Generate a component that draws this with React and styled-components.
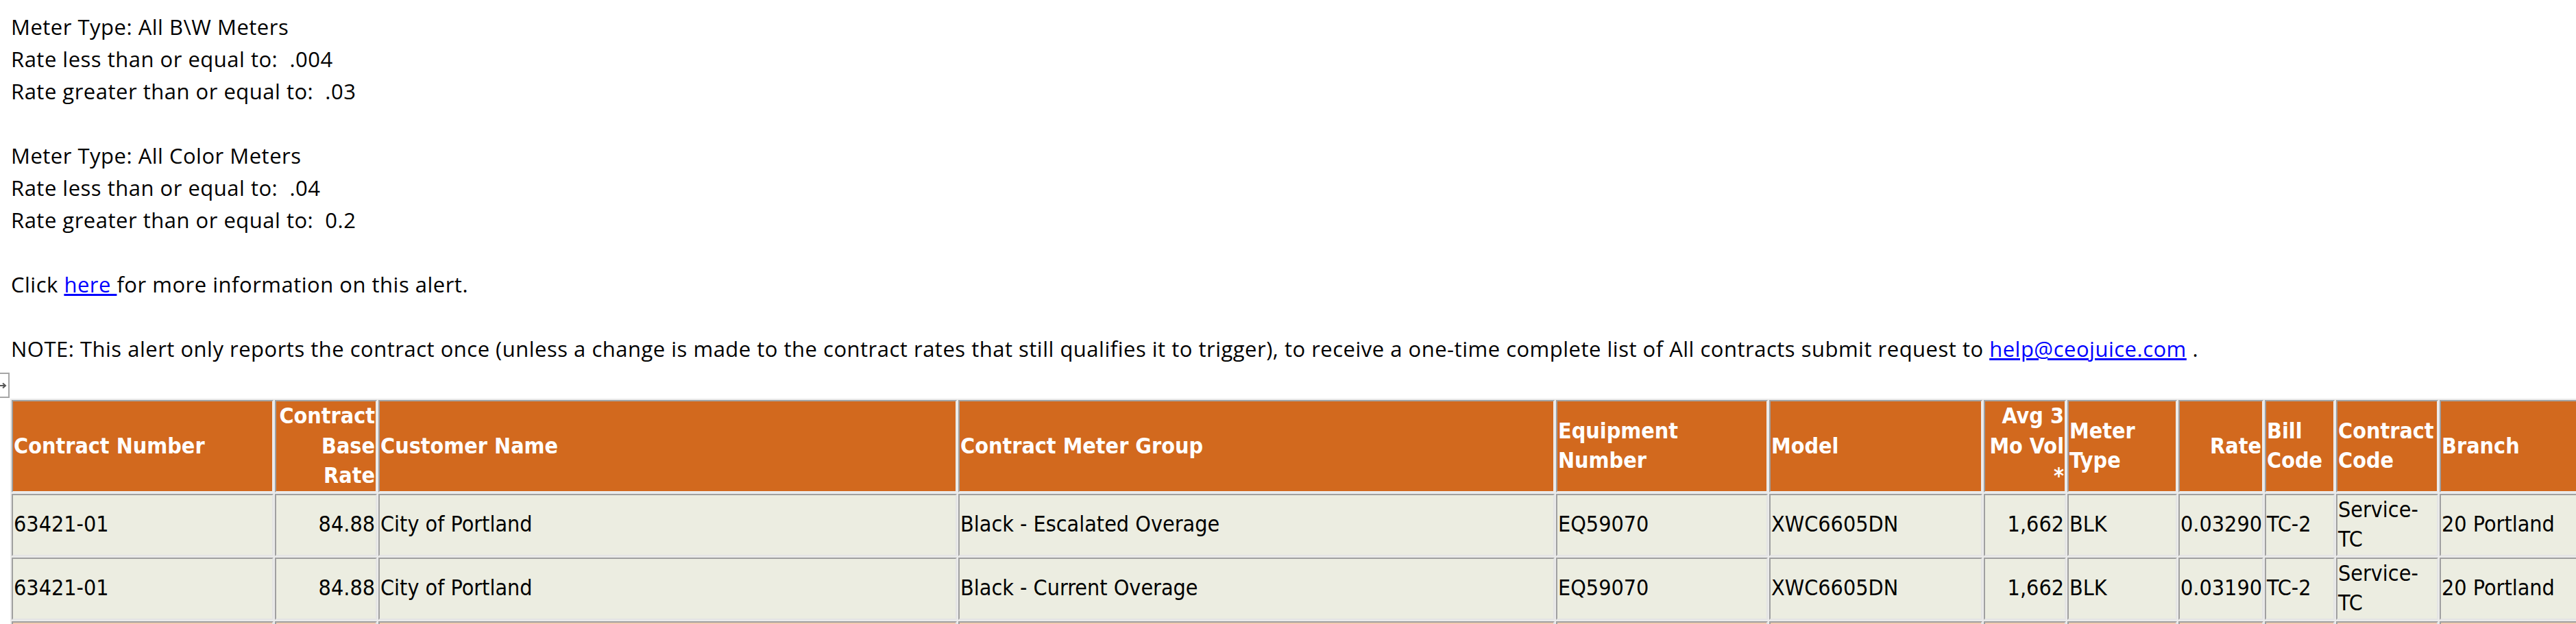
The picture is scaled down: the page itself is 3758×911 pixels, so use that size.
import React from 'react';
import styled, { createGlobalStyle } from 'styled-components';

const GlobalStyle = createGlobalStyle`
  html, body {
    margin: 0;
    padding: 0;
    overflow: hidden;
    background: #ffffff;
  }
`;

const Page = styled.div`
  padding: 16px 0 0 16px;
  color: #000;
`;

const Notes = styled.div`
  font-family: "Open Sans", "Noto Sans", sans-serif;
  font-size: 31px;
  line-height: 47px;
  letter-spacing: 0.5px;
  white-space: nowrap;
`;

const Para = styled.p`
  margin: 0 0 ${p => (p.$last ? 0 : 47)}px 0;
`;

const Link = styled.a`
  color: #0000ff;
  text-decoration: underline;
`;

const MoveHandle = styled.div`
  box-sizing: border-box;
  width: 22px;
  height: 37px;
  margin: 11px 0 0 -24px;
  border: 2px solid #a6a6a6;
  background: #fff;
  display: flex;
  align-items: center;
  justify-content: flex-end;
  padding-right: 2px;
`;

const Grid = styled.table`
  border-collapse: separate;
  border-spacing: 2px;
  table-layout: fixed;
  width: ${p => p.$width}px;
  margin: 1px 0 0 -1px;
  background: #ebebeb;
  font-family: "DejaVu Sans Condensed", "DejaVu Sans", sans-serif;
  font-stretch: condensed;
  font-size: 32px;
  line-height: 43.5px;
`;

const HeadCell = styled.th`
  box-sizing: border-box;
  width: ${p => p.$w}px;
  padding: 0 1px;
  background: #d2691e;
  color: #ffffff;
  font-weight: bold;
  text-align: ${p => p.$align || 'left'};
  vertical-align: middle;
  white-space: nowrap;
  overflow: hidden;
  border-style: solid;
  border-width: 2px;
  border-color: #a0a0a0 #ebebeb #ebebeb #a0a0a0;
`;

const Cell = styled.td`
  box-sizing: border-box;
  padding: 0 1px;
  background: ${p => (p.$tone === 'peach' ? '#f4cbb0' : '#ecede1')};
  text-align: ${p => p.$align || 'left'};
  vertical-align: middle;
  white-space: nowrap;
  overflow: hidden;
  border-style: solid;
  border-width: 2px;
  border-color: #a0a0a0 #e4e4e4 #e4e4e4 #a0a0a0;
`;

const columns = [
  { key: 'contract', label: ['Contract Number'], w: 382 },
  { key: 'base', label: ['Contract', 'Base', 'Rate'], w: 149, align: 'right' },
  { key: 'customer', label: ['Customer Name'], w: 844 },
  { key: 'group', label: ['Contract Meter Group'], w: 870 },
  { key: 'equip', label: ['Equipment', 'Number'], w: 309 },
  { key: 'model', label: ['Model'], w: 311 },
  { key: 'avg', label: ['Avg 3', 'Mo Vol', '*'], w: 120, align: 'right' },
  { key: 'meter', label: ['Meter', 'Type'], w: 160 },
  { key: 'rate', label: ['Rate'], w: 124, align: 'right' },
  { key: 'bill', label: ['Bill', 'Code'], w: 102 },
  { key: 'code', label: ['Contract', 'Code'], w: 149 },
  { key: 'branch', label: ['Branch'], w: 300 },
];

const rows = [
  {
    id: 1, tone: 'plain',
    contract: '63421-01', base: '84.88', customer: 'City of Portland',
    group: 'Black - Escalated Overage', equip: 'EQ59070', model: 'XWC6605DN',
    avg: '1,662', meter: 'BLK', rate: '0.03290', bill: 'TC-2',
    code: ['Service-', 'TC'], branch: '20 Portland',
  },
  {
    id: 2, tone: 'plain',
    contract: '63421-01', base: '84.88', customer: 'City of Portland',
    group: 'Black - Current Overage', equip: 'EQ59070', model: 'XWC6605DN',
    avg: '1,662', meter: 'BLK', rate: '0.03190', bill: 'TC-2',
    code: ['Service-', 'TC'], branch: '20 Portland',
  },
  {
    id: 3, tone: 'peach',
    contract: '63421-01', base: '84.88', customer: 'City of Portland',
    group: 'Color - Current Overage', equip: 'EQ59070', model: 'XWC6605DN',
    avg: '1,204', meter: 'CLR', rate: '0.25000', bill: 'TC-2',
    code: ['Service-', 'TC'], branch: '20 Portland',
  },
];

const lines = (value) => {
  const parts = Array.isArray(value) ? value : [value];
  return parts.map((part, i) => (
    <React.Fragment key={i}>
      {i > 0 && <br />}
      {part}
    </React.Fragment>
  ));
};

const tableWidth = columns.reduce((sum, c) => sum + c.w, 0) + (columns.length + 1) * 2;

function ArrowIcon() {
  return (
    <svg width="12" height="12" viewBox="0 0 12 12">
      <path d="M0 6 H9" stroke="#555" strokeWidth="2" fill="none" />
      <path d="M6 2.5 L10 6 L6 9.5" stroke="#555" strokeWidth="2" fill="none" />
    </svg>
  );
}

export default function App() {
  return (
    <>
      <GlobalStyle />
      <Page>
        <Notes>
          <Para>
            Meter Type: All B\W Meters<br />
            Rate less than or equal to:{'\u00a0\u00a0'}.004<br />
            Rate greater than or equal to:{'\u00a0\u00a0'}.03
          </Para>
          <Para>
            Meter Type: All Color Meters<br />
            Rate less than or equal to:{'\u00a0\u00a0'}.04<br />
            Rate greater than or equal to:{'\u00a0\u00a0'}0.2
          </Para>
          <Para>
            Click <Link href="#">here </Link>for more information on this alert.
          </Para>
          <Para $last>
            NOTE: This alert only reports the contract once (unless a change is made to the contract rates that still
            qualifies it to trigger), to receive a one-time complete list of All contracts submit request to{' '}
            <Link href="#">help@ceojuice.com</Link> .
          </Para>
        </Notes>

        <MoveHandle>
          <ArrowIcon />
        </MoveHandle>

        <Grid $width={tableWidth}>
          <thead>
            <tr>
              {columns.map((c) => (
                <HeadCell key={c.key} $w={c.w} $align={c.align}>
                  {lines(c.label)}
                </HeadCell>
              ))}
            </tr>
          </thead>
          <tbody>
            {rows.map((row) => (
              <tr key={row.id}>
                {columns.map((c) => (
                  <Cell key={c.key} $align={c.align} $tone={row.tone}>
                    {lines(row[c.key])}
                  </Cell>
                ))}
              </tr>
            ))}
          </tbody>
        </Grid>
      </Page>
    </>
  );
}
